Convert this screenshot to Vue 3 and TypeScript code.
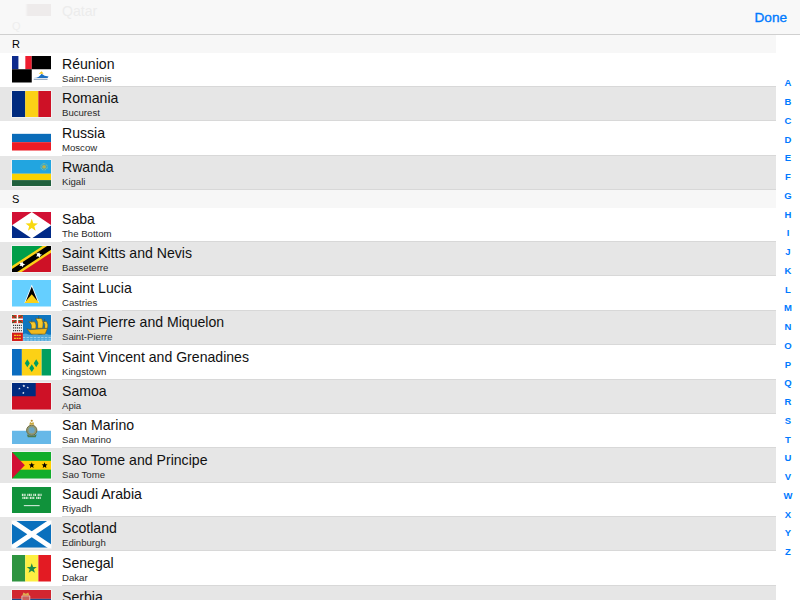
<template>
  <div class="page">
    <header class="nav">
      <div class="ghost">
        <svg class="ghost-flag" viewBox="0 0 26 12"><path d="M0 0h26v12H0l3-1-3-1 3-1-3-1 3-1-3-1 3-1-3-1 3-1-3-1 3-1z" fill="#eeebeb" /></svg>
        <span class="ghost-name">Qatar</span>
        <span class="ghost-letter">Q</span>
      </div>
      <button class="done">Done</button>
    </header>

    <div class="body">
      <main class="list">
        <template v-for="section in sections" :key="section.letter">
          <div class="section-head">{{ section.letter }}</div>
          <div
            v-for="row in section.rows"
            :key="row.name"
            class="row"
            :class="{ alt: row.alt }"
          >
            <svg class="flag" viewBox="0 0 40 27" preserveAspectRatio="none">
              <template v-if="row.flag === 're'">
                <rect width="20" height="13.500" fill="#fff" />
                <rect width="6.500" height="13.500" fill="#0d2a8c" />
                <rect x="13.500" width="6.500" height="13.500" fill="#ee1c2e" />
                <rect x="20" width="20" height="13.500" fill="#000" />
                <rect y="13.500" width="20" height="13.500" fill="#000" />
                <path d="M22 22.500c4-.5 6-1.500 8-4.500l3 2 4 1-1 1.500z" fill="#1d6fc0" />
                <path d="M27 18l3-2.500 2 2.500z" fill="#f7c81e" />
                <rect x="22" y="23.200" width="14" height="1" fill="#7d95b0" />
              </template>
              <template v-else-if="row.flag === 'ro'">
                <rect width="13.400" height="27" fill="#002b7f" />
                <rect x="13.400" width="13.300" height="27" fill="#fcd116" />
                <rect x="26.700" width="13.300" height="27" fill="#ce1126" />
              </template>
              <template v-else-if="row.flag === 'ru'">
                <rect y="9" width="40" height="8.500" fill="#0a6cb9" />
                <rect y="17.500" width="40" height="8.500" fill="#ee1c25" />
              </template>
              <template v-else-if="row.flag === 'rw'">
                <rect width="40" height="14" fill="#22a5e0" />
                <rect y="14" width="40" height="6.500" fill="#fad201" />
                <rect y="20.500" width="40" height="6.500" fill="#20603d" />
                <circle cx="32.500" cy="7" r="2" fill="#b9b24a" />
                <circle cx="32.500" cy="7" r="3.200" fill="none" stroke="#d9d255" stroke-width="0.800" stroke-dasharray="0.800 0.700" />
              </template>
              <template v-else-if="row.flag === 'bq'">
                <rect width="40" height="27" fill="#fff" />
                <path d="M0 0v13.500L20 0zM40 0v13.500L20 0z" fill="#d21034" />
                <path d="M0 27V13.500L20 27zM40 27V13.500L20 27z" fill="#012a87" />
                <path d="M20 7l1.600 4.400 4.700.2-3.700 2.900 1.300 4.500-3.900-2.600-3.900 2.600 1.300-4.500-3.700-2.900 4.700-.2z" fill="#f9d90f" />
              </template>
              <template v-else-if="row.flag === 'kn'">
                <rect width="40" height="27" fill="#009e49" />
                <path d="M40 0v27H0z" fill="#ce1126" />
                <path d="M0 27V20.500L31 0h9v6.500L9 27z" fill="#fcd116" />
                <path d="M0 27v-3.500L35.500 0H40v3.500L4.500 27z" fill="#000" />
                <path d="M27.500 6.500l1 2 2 .5-2 1-.5 2-1.500-1.500-2 .5 1-2-1-1.500 2 0zM10.500 16l1 2 2 .5-2 1-.5 2-1.500-1.500-2 .5 1-2-1-1.500 2 0z" fill="#fff" />
              </template>
              <template v-else-if="row.flag === 'lc'">
                <rect width="40" height="27" fill="#65cfff" />
                <path d="M20 4.500l7.500 19h-15z" fill="#fff" />
                <path d="M20 6.500l6 15.500H14z" fill="#000" />
                <path d="M20 14.500l7.500 9h-15z" fill="#fcd116" />
              </template>
              <template v-else-if="row.flag === 'pm'">
                <rect width="40" height="27" fill="#0f76c0" />
                <path d="M11 19.500q2.500-1.200 5 0t5 0 5 0 5 0 5 0 4 0V27H11z" fill="#4fa8dc" />
                <path d="M11 23h29M11 25.500h29" stroke="#d8edf8" stroke-width="0.600" stroke-dasharray="2.500 1.200" />
                <path d="M15 14l3 1 18-1.500-2.500 6H19.500z" fill="#f0b81d" stroke="#5f4a12" stroke-width="0.500" />
                <path d="M17 7q3.500 2 2.500 7h4.500q1.200-4-1-7zM24 3.500q3 3 2 10h5q1.500-6-1-10zM31.500 6.500q2.500 2.500 1.500 7h3q1-4-1-7z" fill="#f7c92c" stroke="#5f4a12" stroke-width="0.500" />
                <path d="M27 1v3M20 4.500v3M33 4v3" stroke="#5f4a12" stroke-width="0.500" />
                <rect width="11" height="27" fill="#fff" />
                <rect width="11" height="8.500" fill="#d52b1e" />
                <path d="M0 0l11 8.500M11 0L0 8.500" stroke="#0b7a3b" stroke-width="1" />
                <path d="M5.500 0v8.500M0 4.250h11" stroke="#fff" stroke-width="1.500" />
                <rect y="8.500" width="11" height="9.500" fill="#f3f3f3" />
                <path d="M1 10.500h9M1 13.200h9M1 15.900h9" stroke="#3a3a3a" stroke-width="1.200" stroke-dasharray="1.200 0.800" />
                <rect y="18" width="11" height="9" fill="#d31c1c" />
                <path d="M2 20.800h7M2 23.800h7" stroke="#f4c81c" stroke-width="1.300" stroke-dasharray="2 .600" />
              </template>
              <template v-else-if="row.flag === 'vc'">
                <rect width="10" height="27" fill="#0a6cc0" />
                <rect x="10" width="20" height="27" fill="#fcd116" />
                <rect x="30" width="10" height="27" fill="#009e60" />
                <path d="M15.500 10.500l2.500 4-2.500 4-2.500-4zM24.500 10.500l2.500 4-2.500 4-2.500-4zM20 15.500l2.500 4-2.500 4-2.500-4z" fill="#009e60" />
              </template>
              <template v-else-if="row.flag === 'ws'">
                <rect width="40" height="27" fill="#ce1126" />
                <rect width="24" height="13.500" fill="#002b7f" />
                <path d="M12 1.500l.5 1h1l-.8.700.3 1-1-.600-1 .600.300-1-.8-.700h1zM7.500 4.500l.4.800h.8l-.6.500.2.800-.8-.400-.8.400.2-.8-.6-.500h.8zM16 3.500l.4.800h.8l-.6.500.2.800-.8-.400-.8.400.2-.8-.6-.500h.8zM11.500 9l.4.800h.8l-.6.500.2.800-.8-.400-.8.400.2-.8-.6-.500h.8z" fill="#fff" />
              </template>
              <template v-else-if="row.flag === 'sm'">
                <rect y="13" width="40" height="14" fill="#66b8e8" />
                <circle cx="20" cy="12.500" r="5.200" fill="#8d9a7a" stroke="#6f6a3c" />
                <circle cx="20" cy="12.500" r="3" fill="#6ca5c4" />
                <path d="M17.500 7l.8-3 1.700 1 1.700-1 .8 3z" fill="#c9a63c" />
                <circle cx="20" cy="2.800" r="1.100" fill="#b5862a" />
                <path d="M15 16.500q5 3.500 10 0l-1 3h-8z" fill="#4c7a4c" />
              </template>
              <template v-else-if="row.flag === 'st'">
                <rect width="40" height="27" fill="#12ad2b" />
                <rect y="9" width="40" height="9" fill="#ffce00" />
                <path d="M0 0l13 13.500L0 27z" fill="#d21034" />
                <path d="M20 10.500l.8 2.100 2.200.1-1.700 1.400.6 2.100-1.900-1.200-1.900 1.200.6-2.100-1.700-1.400 2.200-.1zM33 10.500l.8 2.100 2.200.1-1.700 1.400.6 2.100-1.900-1.200-1.900 1.200.6-2.100-1.700-1.400 2.200-.1z" fill="#000" />
              </template>
              <template v-else-if="row.flag === 'sa'">
                <rect width="40" height="27" fill="#10923b" />
                <path d="M10 8h4M15.500 8h4.500M21.500 8h3M26 8h4M10.500 11h6M18 11h5M24.500 11h5" stroke="#dbeeda" stroke-width="2.200" stroke-dasharray="1.200 .500" />
                <path d="M12 19h16" stroke="#fff" stroke-width="0.900" />
              </template>
              <template v-else-if="row.flag === 'gd'">
                <rect width="40" height="27" fill="#0a70bd" />
                <path d="M0 0L40 27M40 0L0 27" stroke="#fff" stroke-width="5" />
              </template>
              <template v-else-if="row.flag === 'sn'">
                <rect width="13.400" height="27" fill="#2e9440" />
                <rect x="13.400" width="13.300" height="27" fill="#fdef42" />
                <rect x="26.700" width="13.300" height="27" fill="#e31b23" />
                <path d="M20 8.500l1.300 3.600 3.800.1-3 2.300 1.100 3.700-3.200-2.200-3.200 2.200 1.100-3.700-3-2.300 3.800-.1z" fill="#1d8a4a" />
              </template>
              <template v-else-if="row.flag === 'rs'">
                <rect width="40" height="9" fill="#d22630" />
                <rect y="9" width="40" height="9" fill="#1c4a8c" />
                <rect y="18" width="40" height="9" fill="#fff" />
                <path d="M10 6h8v6l-4 3-4-3z" fill="#c9605c" stroke="#e8d8c8" stroke-width="0.800" />
                <path d="M10.500 5.500l1-3 2.500 1.200 2.500-1.200 1 3z" fill="#e0a94c" />
              </template>
            </svg>
            <div class="info">
              <div class="name">{{ row.name }}</div>
              <div v-if="row.capital" class="capital">{{ row.capital }}</div>
            </div>
          </div>
        </template>
      </main>

      <nav class="index">
        <span v-for="l in letters" :key="l" class="index-letter">{{ l }}</span>
      </nav>
    </div>
  </div>
</template>

<script setup lang="ts">
interface Row {
  name: string
  capital: string
  flag: string
  alt: boolean
}

const letters = 'ABCDEFGHIJKLMNOPQRSTUVWXYZ'.split('')

const makeRows = (items: [string, string, string][]): Row[] =>
  items.map(([name, capital, flag], i) => ({
    name,
    capital,
    flag,
    alt: i % 2 === 1,
  }))

const sections = [
  {
    letter: 'R',
    rows: makeRows([
      ['Réunion', 'Saint-Denis', 're'],
      ['Romania', 'Bucurest', 'ro'],
      ['Russia', 'Moscow', 'ru'],
      ['Rwanda', 'Kigali', 'rw'],
    ]),
  },
  {
    letter: 'S',
    rows: makeRows([
      ['Saba', 'The Bottom', 'bq'],
      ['Saint Kitts and Nevis', 'Basseterre', 'kn'],
      ['Saint Lucia', 'Castries', 'lc'],
      ['Saint Pierre and Miquelon', 'Saint-Pierre', 'pm'],
      ['Saint Vincent and Grenadines', 'Kingstown', 'vc'],
      ['Samoa', 'Apia', 'ws'],
      ['San Marino', 'San Marino', 'sm'],
      ['Sao Tome and Principe', 'Sao Tome', 'st'],
      ['Saudi Arabia', 'Riyadh', 'sa'],
      ['Scotland', 'Edinburgh', 'gd'],
      ['Senegal', 'Dakar', 'sn'],
      ['Serbia', '', 'rs'],
    ]),
  },
]
</script>

<style>
html,
body {
  margin: 0;
  background: #fff;
}
</style>

<style scoped>
.page {
  width: 800px;
  height: 600px;
  overflow: hidden;
  display: flex;
  flex-direction: column;
  font-family: "Liberation Sans", Arial, sans-serif;
  color: #111;
}

.nav {
  height: 34px;
  flex: none;
  display: flex;
  justify-content: space-between;
  background: #f8f8f8;
  border-bottom: 1px solid #d0d0d0;
  overflow: hidden;
}

.ghost {
  display: grid;
  grid-template-columns: 14px 36px auto;
  grid-template-rows: 16px 18px;
  padding-left: 12px;
}

.ghost-flag {
  grid-column: 2;
  grid-row: 1;
  width: 26px;
  height: 12px;
  margin-top: 4px;
  margin-left: -1px;
}

.ghost-name {
  grid-column: 3;
  grid-row: 1;
  font-size: 14.1px;
  line-height: 22px;
  color: #ececec;
}

.ghost-letter {
  grid-column: 1;
  grid-row: 2;
  font-size: 11px;
  line-height: 20px;
  color: #eeeeee;
}

.done {
  border: 0;
  background: none;
  padding: 0 13px 0 0;
  font: 400 13.6px "Liberation Sans", Arial, sans-serif;
  -webkit-text-stroke: 0.35px #007aff;
  color: #007aff;
}

.body {
  flex: 1;
  min-height: 0;
  display: flex;
}

.list {
  width: 776px;
  flex: none;
}

.section-head {
  height: 17.5px;
  line-height: 18px;
  padding-left: 12px;
  font-size: 11px;
  color: #000;
  background: #f7f7f7;
}

.row {
  height: 34.4px;
  display: flex;
  align-items: center;
  background: #fff;
}

.row.alt {
  background: #e6e6e6;
}

.flag {
  width: 39.5px;
  height: 26.5px;
  flex: none;
  margin: 0 11px 0 11.5px;
  box-shadow: 0 0 0 0.6px rgba(255, 255, 255, 0.75);
}

.info {
  flex: 1;
  align-self: stretch;
  box-sizing: border-box;
  padding-top: 2.4px;
  border-bottom: 1px solid #d8d8d8;
}

.name {
  font-size: 14.1px;
  line-height: 18px;
}

.capital {
  font-size: 9.6px;
  line-height: 11px;
  color: #2a2a2a;
}

.index {
  flex: 1;
  display: flex;
  flex-direction: column;
  justify-content: center;
  align-items: center;
  padding-top: 1px;
}

.index-letter {
  height: 18.76px;
  line-height: 18.76px;
  font-size: 9.5px;
  font-weight: 700;
  color: #007aff;
}
</style>
